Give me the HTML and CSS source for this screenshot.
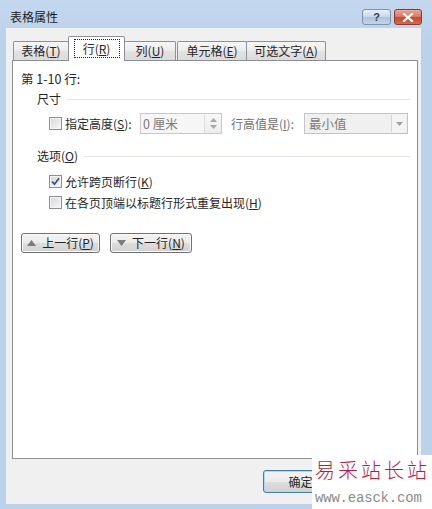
FILE: index.html
```html
<!DOCTYPE html>
<html lang="zh-CN">
<head>
<meta charset="utf-8">
<title>表格属性</title>
<link rel="stylesheet" href="styles.css">
</head>
<body>
<div class="window">
  <div class="titlebar">
    <span class="title">表格属性</span>
    <div class="caption-btns">
      <span class="cap-btn help">?</span>
      <span class="cap-btn close">
        <svg width="12" height="9" viewBox="0 0 12 9"><path d="M2 1 L10 8 M10 1 L2 8" stroke="#fff" stroke-width="2.2" stroke-linecap="square"/></svg>
      </span>
    </div>
  </div>
  <div class="client">
    <div class="tabs">
      <div class="tab t1">表格(<u>T</u>)</div>
      <div class="tab t2 active"><span class="focus">行(<u>R</u>)</span></div>
      <div class="tab t3">列(<u>U</u>)</div>
      <div class="tab t4">单元格(<u>E</u>)</div>
      <div class="tab t5">可选文字(<u>A</u>)</div>
    </div>
    <div class="panel">
      <div class="count">第 1-10 行:</div>
      <div class="group-title"><span>尺寸</span></div>
      <div class="size-row">
        <span class="cb"></span>
        <span class="lbl1">指定高度(<u>S</u>):</span>
        <span class="input">
          <span class="input-text">0 厘米</span>
          <span class="spin">
            <svg width="7" height="4" viewBox="0 0 7 4"><path d="M0 4 L3.5 0 L7 4Z" fill="#a8a8a8"/></svg>
            <svg width="7" height="4" viewBox="0 0 7 4"><path d="M0 0 L3.5 4 L7 0Z" fill="#a8a8a8"/></svg>
          </span>
        </span>
        <span class="lbl2">行高值是(<u>I</u>):</span>
        <span class="select">
          <span class="select-text">最小值</span>
          <span class="drop">
            <svg width="7" height="4" viewBox="0 0 7 4"><path d="M0 0 L3.5 4 L7 0Z" fill="#a0a0a0"/></svg>
          </span>
        </span>
      </div>
      <div class="group-title gt2"><span>选项(<u>O</u>)</span></div>
      <div class="check-row first">
        <span class="cb checked">
          <svg width="9" height="9" viewBox="0 0 9 9"><path d="M1 4.5 L3.5 7.2 L8 1.2" fill="none" stroke="#3f5383" stroke-width="1.8"/></svg>
        </span>
        <span>允许跨页断行(<u>K</u>)</span>
      </div>
      <div class="check-row">
        <span class="cb"></span>
        <span>在各页顶端以标题行形式重复出现(<u>H</u>)</span>
      </div>
      <div class="nav">
        <button class="btn nav1"><svg width="9" height="6" viewBox="0 0 9 6"><path d="M0 6 L4.5 0 L9 6Z" fill="#7b7b7b"/></svg><span>上一行(<u>P</u>)</span></button>
        <button class="btn nav2"><svg width="9" height="6" viewBox="0 0 9 6"><path d="M0 0 L4.5 6 L9 0Z" fill="#7b7b7b"/></svg><span>下一行(<u>N</u>)</span></button>
      </div>
    </div>
    <div class="footer">
      <button class="btn dlg ok">确定</button>
      <button class="btn dlg" aria-label="取消"></button>
    </div>
  </div>
</div>
<div class="watermark">
  <div class="wm-cn">易采站长站</div>
  <div class="wm-en">www.easck.com</div>
</div>
</body>
</html>
```

FILE: styles.css
```css
* { box-sizing: border-box; }

html, body {
  margin: 0;
  padding: 0;
}

body {
  width: 432px;
  height: 509px;
  overflow: hidden;
  background: #bcd3eb;
  font-family: "Noto Sans CJK SC", "Noto Sans", sans-serif;
  font-size: 12px;
  color: #262626;
  position: relative;
}

u { text-decoration: underline; text-underline-offset: 1px; }

.window {
  height: 509px;
  display: flex;
  flex-direction: column;
  background: linear-gradient(#c3d8ef, #bcd2ea 40px);
}

.titlebar {
  height: 28px;
  display: flex;
  align-items: flex-start;
  justify-content: space-between;
  padding: 0 10px 0 10px;
}

.title {
  font-size: 12px;
  line-height: 14px;
  margin-top: 10px;
  color: #1b1b1b;
}

.caption-btns {
  display: flex;
  gap: 3px;
  margin-top: 9px;
}

.cap-btn {
  height: 16px;
  border-radius: 3px;
  display: flex;
  align-items: center;
  justify-content: center;
}

.help {
  width: 29px;
  border: 1px solid #7d93ad;
  background: linear-gradient(#e6eef8, #c8d8ea 50%, #adc3dc 51%, #c2d4e8);
  color: #2e3d52;
  font-family: "Liberation Sans", sans-serif;
  font-weight: bold;
  font-size: 11px;
  line-height: 14px;
}

.close {
  width: 28px;
  border: 1px solid #8c3b2c;
  background: linear-gradient(#eaa896, #d6765e 50%, #c44a2f 51%, #d36a4d);
}

.client {
  margin: 0 11px 5px 6px;
  flex: 1;
  background: #f0f0f0;
  display: flex;
  flex-direction: column;
}

.tabs {
  display: flex;
  align-items: flex-end;
  height: 25px;
  margin: 8px 0 0 7px;
  position: relative;
  z-index: 1;
}

.tab {
  height: 19px;
  border: 1px solid #8e9196;
  border-bottom: none;
  border-radius: 2px 2px 0 0;
  background: linear-gradient(#f6f6f6, #ececec 50%, #e2e2e2 51%, #dcdcdc);
  display: flex;
  align-items: center;
  justify-content: center;
  line-height: 14px;
  margin-bottom: 1px;
  margin-left: -1px;
}

.t1 { width: 56px; margin-left: 0; }
.t2 { width: 57px; }
.t3 { width: 52px; }
.t4 { width: 70px; margin-left: 1px; }
.t5 { width: 80px; }

.tab.active {
  height: 25px;
  margin-bottom: 0;
  background: #fff;
  align-items: flex-start;
  padding-top: 2px;
  position: relative;
  z-index: 2;
}

.focus {
  border: 1px dotted #222;
  width: 46px;
  height: 19px;
  display: flex;
  align-items: center;
  justify-content: center;
}

.panel {
  width: 406px;
  height: 399px;
  margin: -1px 0 0 6px;
  border: 1px solid #8b8e93;
  background: #fff;
  padding: 0 7px 0 8px;
  display: flex;
  flex-direction: column;
}

.count {
  margin-top: 10px;
  line-height: 16px;
  height: 16px;
  font-size: 12.5px;
}

.group-title {
  margin: 4px 0 0 16px;
  height: 16px;
  line-height: 16px;
  display: flex;
  align-items: center;
}

.group-title::after {
  content: "";
  flex: 1;
  height: 1px;
  background: #dfe3e8;
  margin-left: 6px;
}

.gt2 { margin-top: 14px; }

.size-row {
  margin: 6px 0 0 28px;
  height: 21px;
  display: flex;
  align-items: center;
}

.cb {
  width: 13px;
  height: 13px;
  flex: none;
  border: 1px solid #8f8f8f;
  background: linear-gradient(135deg, #d4d7dc, #f7f7f7);
  box-shadow: inset 0 0 0 1px #f4f4f4;
  display: flex;
  align-items: center;
  justify-content: center;
}

.lbl1 {
  width: 78px;
  padding-left: 3px;
  line-height: 16px;
}

.input {
  width: 82px;
  height: 21px;
  border: 1px solid #c8c8c8;
  background: #f6f6f6;
  display: flex;
  align-items: stretch;
}

.input-text {
  flex: 1;
  padding-left: 2px;
  line-height: 19px;
  color: #7a7a7a;
  font-size: 12.5px;
}

.spin {
  width: 17px;
  border-left: 1px solid #dcdcdc;
  display: flex;
  flex-direction: column;
  align-items: center;
  justify-content: space-around;
  padding: 2px 0;
  background: linear-gradient(#f8f8f8, #ededed);
}

.lbl2 {
  width: 73px;
  margin-left: 9px;
  color: #6f6f6f;
  line-height: 16px;
}

.select {
  width: 104px;
  height: 21px;
  border: 1px solid #c4c4c4;
  background: #f0f0f0;
  display: flex;
}

.select-text {
  flex: 1;
  padding-left: 4px;
  line-height: 19px;
  color: #7a7a7a;
  font-size: 12.5px;
}

.drop {
  width: 15px;
  margin: 1px 1px 1px 0;
  border-left: 1px solid #d6d6d6;
  display: flex;
  align-items: center;
  justify-content: center;
  background: #f4f4f4;
}

.check-row {
  margin-left: 28px;
  height: 21px;
  display: flex;
  align-items: center;
  gap: 3px;
  line-height: 16px;
}

.check-row.first { margin-top: 7px; }

.nav {
  margin-top: 20px;
  display: flex;
  gap: 10px;
}

.btn {
  font-family: "Noto Sans CJK SC", "Noto Sans", sans-serif;
  font-size: 12px;
  color: #262626;
  border: 1px solid #707070;
  border-radius: 3px;
  background: linear-gradient(#f3f3f3, #ebebeb 50%, #dddddd 51%, #d1d1d1);
  box-shadow: inset 0 0 0 1px #fbfbfb;
  padding: 0;
  margin: 0;
  display: flex;
  align-items: center;
  justify-content: center;
  line-height: 16px;
}

.nav .btn {
  height: 20px;
  gap: 6px;
}

.nav1 { width: 79px; }
.nav2 { width: 82px; }

.footer {
  flex: 1;
  display: flex;
  justify-content: flex-end;
  align-items: flex-start;
  padding: 11px 2px 0 0;
  gap: 6px;
}

.dlg {
  width: 75px;
  height: 23px;
}

.ok {
  border-color: #3c7fb1;
  box-shadow: inset 0 0 0 1px #a6dcf5;
}

.watermark {
  position: absolute;
  left: 312px;
  top: 455px;
  width: 120px;
  height: 54px;
  background: #fff;
  padding: 3px 0 0 3px;
}

.wm-cn {
  font-family: "Noto Sans CJK SC", sans-serif;
  font-size: 20px;
  line-height: 24px;
  height: 24px;
  letter-spacing: 3px;
  color: #c0173f;
  font-weight: 300;
}

.wm-en {
  font-family: "Liberation Mono", monospace;
  font-size: 14px;
  line-height: 16px;
  color: #8c8c8c;
  margin-top: 8px;
  letter-spacing: -0.2px;
}
```
